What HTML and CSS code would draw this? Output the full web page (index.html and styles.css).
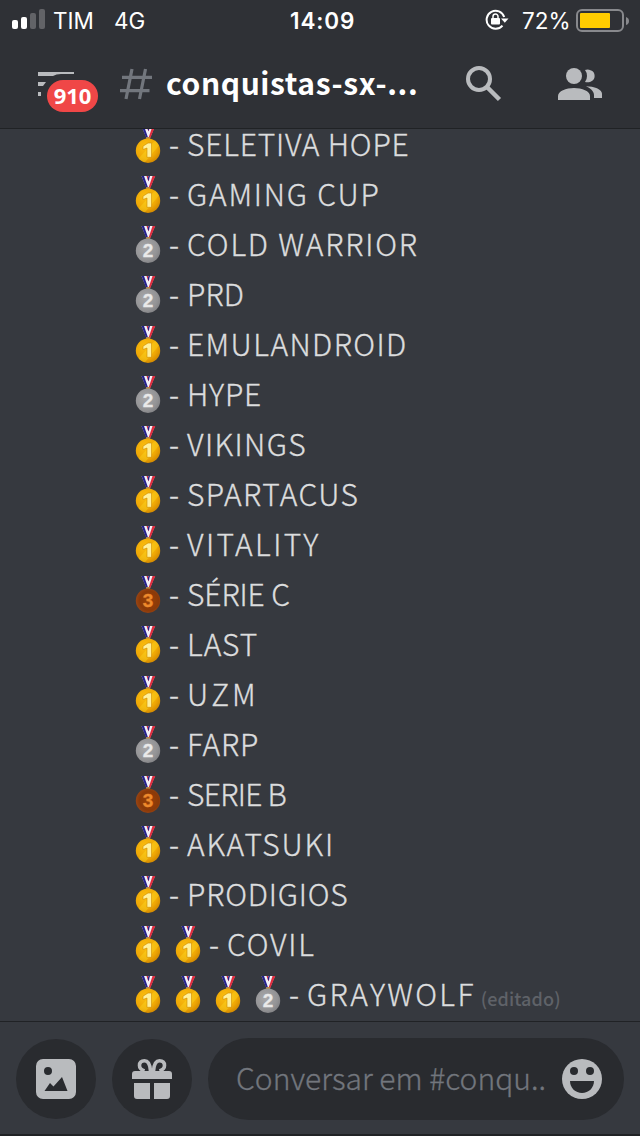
FILE: index.html
```html
<!DOCTYPE html>
<html lang="pt-BR">
<head>
<meta charset="utf-8">
<title>conquistas</title>
<link rel="stylesheet" href="styles.css">
</head>
<body>
<svg class="defs" width="0" height="0" aria-hidden="true">
  <defs>
    <radialGradient id="gold" cx=".4" cy=".35" r=".7"><stop offset="0" stop-color="#fbbf10"/><stop offset=".65" stop-color="#efa805"/><stop offset="1" stop-color="#d08600"/></radialGradient>
    <radialGradient id="silver" cx=".4" cy=".4" r=".7"><stop offset="0" stop-color="#a9a9ab"/><stop offset=".7" stop-color="#929294"/><stop offset="1" stop-color="#7c7c7f"/></radialGradient>
    <radialGradient id="bronze" cx=".55" cy=".5" r=".65"><stop offset="0" stop-color="#9a4208"/><stop offset=".6" stop-color="#8a3908"/><stop offset="1" stop-color="#a14c1c"/></radialGradient>
    <symbol id="ribbon" viewBox="0 0 26 38">
      <path d="M6.500 0h13.500l-5 12h-3.500z" fill="#f1f1f7"/>
      <path d="M6.500 0h2.500l4 11.500h-2z" fill="#25218c"/>
      <path d="M11.500 0h1.500l1.300 3-.8 2.500z" fill="#d62b3d"/>
      <path d="M13.500 0h1.500l-1.500 5-.8-2z" fill="#25218c"/>
      <path d="M17.500 0h2.800l-5 12h-1.800z" fill="#e02b3d"/>
      <path d="M10.800 13.500l.8-2.500h3l.8 2.500z" fill="#b98a45"/>
    </symbol>
    <symbol id="m1" viewBox="0 0 26 38">
      <use href="#ribbon" width="26" height="38"/>
      <circle cx="13" cy="24.700" r="12.200" fill="url(#gold)"/>
      <path d="M3.500 32.500L20 14.500a12 12 0 0 1 4 5L10 36.200a12 12 0 0 1-6.500-3.700z" fill="#ffdf25" opacity=".35"/>
      <path d="M8 20.200l5-3.200h3.500v14.300h-4.500V22l-4 1.500z" fill="#fff09a" stroke="#cf8a00" stroke-width=".6"/>
    </symbol>
    <symbol id="m2" viewBox="0 0 26 38">
      <use href="#ribbon" width="26" height="38"/>
      <circle cx="13" cy="24.700" r="12.200" fill="url(#silver)"/>
      <text x="13" y="31.300" text-anchor="middle" class="digit" fill="#e9e9e9" stroke="#e9e9e9">2</text>
    </symbol>
    <symbol id="m3" viewBox="0 0 26 38">
      <use href="#ribbon" width="26" height="38"/>
      <circle cx="13" cy="24.700" r="12.200" fill="url(#bronze)"/>
      <text x="13" y="31.300" text-anchor="middle" class="digit" fill="#ee8a2c" stroke="#ee8a2c">3</text>
    </symbol>
  </defs>
</svg>
<div class="screen">
  <header class="top">
    <div class="status">
      <svg class="signal" width="34" height="22" viewBox="0 0 34 22"><g fill="#fff"><rect x="0" y="11" width="6" height="9" rx="2"/><rect x="9" y="8" width="6" height="12" rx="2"/></g><g fill="#626367"><rect x="18" y="4" width="6" height="16" rx="2"/><rect x="27" y="0" width="6" height="20" rx="2"/></g></svg>
      <span class="carrier">TIM</span><span class="net">4G</span>
      <span class="clock">14:09</span>
      <svg class="lock" width="24" height="22" viewBox="0 0 24 22"><path d="M19.200 8A9 9 0 1 0 17.500 16.600" fill="none" stroke="#fff" stroke-width="2"/><path d="M16 9.500h7.500l-3.700 4.300z" fill="#fff"/><rect x="6" y="9" width="9" height="6.500" rx="1" fill="#fff"/><path d="M8 9V7.500a2.500 2.500 0 0 1 5 0V9" fill="none" stroke="#fff" stroke-width="1.500"/></svg>
      <span class="pct">72%</span>
      <svg class="battery" width="54" height="24" viewBox="0 0 54 24"><rect x="1" y="1" width="46" height="21" rx="5" fill="none" stroke="#88898d" stroke-width="2"/><rect x="4" y="4" width="30" height="15" rx="1" fill="#fc0"/><path d="M50 8q3 1 3 4t-3 4z" fill="#88898d"/></svg>
    </div>
    <div class="bar">
      <div class="menu">
        <svg width="36" height="25" viewBox="0 0 36 25" fill="#b9bbbe"><path d="M0 0h36v2H23q-5 0-8 2H0zM0 10h8l-3 4H0zM0 20h3v4H0z"/></svg>
        <span class="badge">910</span>
      </div>
      <svg class="hash" width="34" height="32" viewBox="0 0 34 32" fill="none" stroke="#72767d" stroke-width="3.200"><path d="M12 1L6 31M25.500 1L19.500 31M2 9.300h30M-.5 22.700h30"/></svg>
      <h1 class="channel">conquistas-sx-...</h1>
      <svg class="search" width="36" height="36" viewBox="0 0 36 36"><circle cx="13" cy="13" r="11" fill="none" stroke="#b9bbbe" stroke-width="4"/><path d="M21.500 21.500L33.500 33.500" stroke="#b9bbbe" stroke-width="4.500"/></svg>
      <svg class="people" width="44" height="32" viewBox="0 0 44 32" fill="#b9bbbe"><circle cx="16" cy="8" r="8"/><path d="M27 2q3-1 5.500.3a6 6 0 0 1 0 11.400Q30 14.700 27 14q2-2.500 2-6t-2-6zM0 32v-4c0-5 8-8 16-8s16 3 16 8v4zM28 18.300c8 0 16 3 16 7.500V30h-8v-3c0-4-4-7-8-8.700z"/></svg>
    </div>
  </header>
  <main class="chat">
    <p class="row"><svg class="medal"><use href="#m1"/></svg><span class="dash">-</span><span class="name">SELETIVA HOPE</span></p>
    <p class="row"><svg class="medal"><use href="#m1"/></svg><span class="dash">-</span><span class="name wide">GAMING CUP</span></p>
    <p class="row"><svg class="medal"><use href="#m2"/></svg><span class="dash">-</span><span class="name wide">COLD WARRIOR</span></p>
    <p class="row"><svg class="medal"><use href="#m2"/></svg><span class="dash">-</span><span class="name snug">PRD</span></p>
    <p class="row"><svg class="medal"><use href="#m1"/></svg><span class="dash">-</span><span class="name airy">EMULANDROID</span></p>
    <p class="row"><svg class="medal"><use href="#m2"/></svg><span class="dash">-</span><span class="name">HYPE</span></p>
    <p class="row"><svg class="medal"><use href="#m1"/></svg><span class="dash">-</span><span class="name airy">VIKINGS</span></p>
    <p class="row"><svg class="medal"><use href="#m1"/></svg><span class="dash">-</span><span class="name airy">SPARTACUS</span></p>
    <p class="row"><svg class="medal"><use href="#m1"/></svg><span class="dash">-</span><span class="name wider">VITALITY</span></p>
    <p class="row"><svg class="medal"><use href="#m3"/></svg><span class="dash">-</span><span class="name tight">SÉRIE C</span></p>
    <p class="row"><svg class="medal"><use href="#m1"/></svg><span class="dash">-</span><span class="name">LAST</span></p>
    <p class="row"><svg class="medal"><use href="#m1"/></svg><span class="dash">-</span><span class="name widest">UZM</span></p>
    <p class="row"><svg class="medal"><use href="#m2"/></svg><span class="dash">-</span><span class="name">FARP</span></p>
    <p class="row"><svg class="medal"><use href="#m3"/></svg><span class="dash">-</span><span class="name tighter">SERIE B</span></p>
    <p class="row"><svg class="medal"><use href="#m1"/></svg><span class="dash">-</span><span class="name wide">AKATSUKI</span></p>
    <p class="row"><svg class="medal"><use href="#m1"/></svg><span class="dash">-</span><span class="name">PRODIGIOS</span></p>
    <p class="row"><svg class="medal"><use href="#m1"/></svg><svg class="medal"><use href="#m1"/></svg><span class="dash">-</span><span class="name wide">COVIL</span></p>
    <p class="row"><svg class="medal"><use href="#m1"/></svg><svg class="medal"><use href="#m1"/></svg><svg class="medal"><use href="#m1"/></svg><svg class="medal"><use href="#m2"/></svg><span class="dash">-</span><span class="name wider">GRAYWOLF</span><span class="edited">(editado)</span></p>
  </main>
  <footer class="composer">
    <div class="round"><svg width="40" height="40" viewBox="0 0 40 40"><path fill="#b9bbbe" fill-rule="evenodd" d="M7 0h26a7 7 0 0 1 7 7v26a7 7 0 0 1-7 7H7a7 7 0 0 1-7-7V7a7 7 0 0 1 7-7zM12 8a4 4 0 1 0 0 8 4 4 0 0 0 0-8zM8.500 32h23L26 18l-8.500 9.500L14 24z"/></svg></div>
    <div class="round"><svg width="40" height="40" viewBox="0 0 40 40"><path fill="#b9bbbe" d="M3 12h34a3 3 0 0 1 3 3v5H0v-5a3 3 0 0 1 3-3zM2 24h16v16H5a3 3 0 0 1-3-3zM22 24h16v13a3 3 0 0 1-3 3H22z"/><path d="M18.500 12C18 5 16 1.800 12.500 1.800 9 1.800 7.500 4 7.500 6.500S9.500 11 12.500 12M21.500 12C22 5 24 1.800 27.500 1.800c3.500 0 5 2.200 5 4.700S30.500 11 27.500 12" fill="none" stroke="#b9bbbe" stroke-width="3.600"/></svg></div>
    <div class="field">
      <span class="hint">Conversar em #conqu..</span>
      <svg width="40" height="40" viewBox="0 0 40 40"><circle cx="20" cy="20" r="20" fill="#b9bbbe"/><g fill="#292b2f"><circle cx="12" cy="12" r="4"/><circle cx="28" cy="12" r="4"/><path d="M8 22h24c0 7-5.500 12-12 12S8 29 8 22z"/></g></svg>
    </div>
  </footer>
</div>
</body>
</html>
```
FILE: styles.css
```css
* { box-sizing: border-box; }
body { margin: 0; background: #36393f; }
svg { display: block; flex: none; }
.defs { position: absolute; }
.digit { font: 900 19px "Liberation Sans", sans-serif; stroke-width: .3px; }
.screen {
  width: 640px; height: 1136px; display: flex; flex-direction: column;
  font-family: "Noto Sans CJK SC", sans-serif; color: #dcddde;
}
.top { position: relative; z-index: 1; height: 129px; background: #2f3136; border-bottom: 1px solid #202225; flex: none; }
.status {
  height: 40px; display: flex; align-items: center; padding-left: 12px;
  font: 400 22.500px/40px "Inter", sans-serif; color: #fff;
}
.carrier, .net, .clock, .pct { padding-top: 2px; }
.carrier { width: 61px; margin-left: 7px; }
.net { width: 176px; }
.clock { width: 195px; font-weight: 600; letter-spacing: .9px; }
.lock { margin-right: 13px; }
.pct { width: 54px; }
.battery { margin-top: 1px; }
.bar { height: 88px; display: flex; align-items: center; padding-left: 38px; }
.menu { width: 82px; height: 44px; position: relative; padding-top: 10px; }
.badge {
  position: absolute; left: 9px; top: 18px; width: 51px; height: 32px; border-radius: 16px;
  background: #f04747; color: #fff; font: 700 22px/30px "Open Sans", sans-serif; text-align: center;
}
.channel { width: 300px; margin: -4px 0 0 12px; font: 700 30px/44px "Noto Sans CJK SC", sans-serif; color: #fff; letter-spacing: .6px; white-space: nowrap; }
.people { margin-left: 56px; }
.chat { height: 892px; flex: none; padding-left: 135px; display: flex; flex-direction: column; justify-content: flex-end; padding-bottom: 1px; }
.row { height: 50px; flex: none; margin: 0; display: flex; align-items: center; font-weight: 300; font-size: 30px; line-height: 32px; white-space: nowrap; }
.medal { width: 26px; height: 38px; margin-right: 14px; }
.dash, .name { margin-top: -4px; -webkit-text-stroke: .35px #dcddde; }
.dash { width: 18px; margin-left: -6px; }
.name { letter-spacing: .8px; }
.tighter { letter-spacing: -.7px; }
.tight { letter-spacing: -.1px; }
.snug { letter-spacing: .1px; }
.airy { letter-spacing: 1.400px; }
.wide { letter-spacing: 1.800px; }
.wider { letter-spacing: 2.400px; }
.widest { letter-spacing: 3px; }
.edited { margin: 6px 0 0 5px; font-size: 18px; font-weight: 500; letter-spacing: .1px; color: #5f6268; }
.composer { height: 115px; border-top: 1px solid #202225; border-bottom: 2px solid #202225; display: flex; align-items: center; gap: 16px; padding: 2px 16px 0; }
.round { width: 80px; height: 80px; border-radius: 50%; background: #292b2f; display: grid; place-items: center; flex: none; }
.field { width: 416px; flex: none; height: 82px; border-radius: 41px; background: #292b2f; display: flex; align-items: center; padding: 0 22px 0 28px; }
.hint { width: 326px; flex: none; margin-top: -4px; font-size: 30px; font-weight: 300; letter-spacing: 0; color: #72767d; -webkit-text-stroke: .3px #72767d; white-space: nowrap; }
```
